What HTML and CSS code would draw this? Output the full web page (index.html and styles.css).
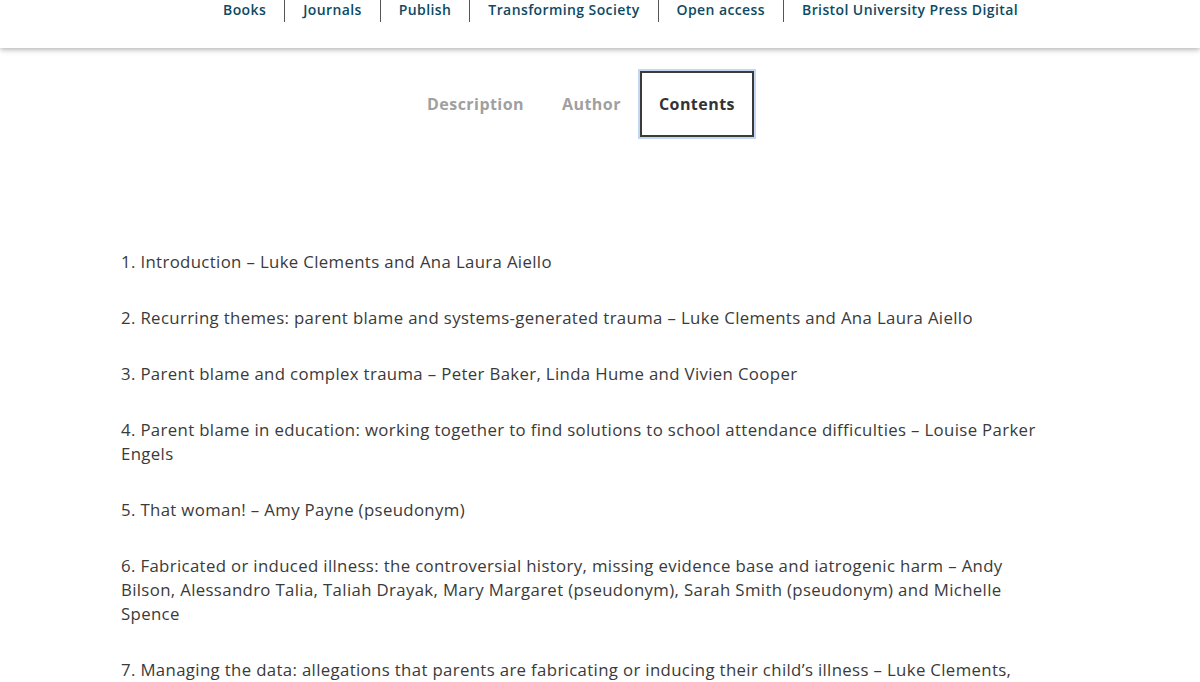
FILE: index.html
```html
<!DOCTYPE html>
<html lang="en">
<head>
    <meta charset="UTF-8">
    <meta name="viewport" content="width=device-width, initial-scale=1.0">
    <title>Contents</title>
    <link rel="stylesheet" href="styles.css">
</head>
<body>
    <header class="site-header">
        <ul class="main-nav">
            <li><a href="#">Books</a></li>
            <li><a href="#">Journals</a></li>
            <li><a href="#">Publish</a></li>
            <li><a href="#">Transforming Society</a></li>
            <li><a href="#">Open access</a></li>
            <li><a href="#">Bristol University Press Digital</a></li>
        </ul>
    </header>

    <div class="tabs">
        <button class="tab">Description</button>
        <button class="tab">Author</button>
        <button class="tab active">Contents</button>
    </div>

    <div class="contents">
        <p>1. Introduction – Luke Clements and Ana Laura Aiello</p>
        <p>2. Recurring themes: parent blame and systems-generated trauma – Luke Clements and Ana Laura Aiello</p>
        <p>3. Parent blame and complex trauma – Peter Baker, Linda Hume and Vivien Cooper</p>
        <p>4. Parent blame in education: working together to find solutions to school attendance difficulties – Louise Parker Engels</p>
        <p>5. That woman! – Amy Payne (pseudonym)</p>
        <p>6. Fabricated or induced illness: the controversial history, missing evidence base and iatrogenic harm – Andy Bilson, Alessandro Talia, Taliah Drayak, Mary Margaret (pseudonym), Sarah Smith (pseudonym) and Michelle Spence</p>
        <p>7. Managing the data: allegations that parents are fabricating or inducing their child’s illness – Luke Clements, Ana Laura Aiello and Sorsha Roberts</p>
    </div>
</body>
</html>
```

FILE: styles.css
```css
body {
    font-family: "Open Sans", "Liberation Sans", sans-serif;
    margin: 0;
    color: #3a3a3a;
    background: #fff;
    overflow: hidden;
}
.site-header {
    height: 48px;
    background: #fff;
    box-shadow: 0 2px 5px rgba(0, 0, 0, 0.28);
    position: relative;
}
.main-nav {
    list-style: none;
    margin: 0;
    padding: 0 0 0 41px;
    display: flex;
    justify-content: center;
}
.main-nav li {
    height: 22px;
    padding: 0 18px;
}
.main-nav li + li {
    border-left: 1px solid #555;
}
.main-nav a {
    display: block;
    font-size: 14px;
    font-weight: 600;
    letter-spacing: 0.4px;
    line-height: 20px;
    color: #0d4a63;
    text-decoration: none;
}
.tabs {
    display: flex;
    justify-content: center;
    padding-right: 38px;
    margin-top: 23px;
}
.tab {
    font-family: inherit;
    font-size: 16px;
    font-weight: 700;
    letter-spacing: 0.45px;
    line-height: 24px;
    color: #a0a0a0;
    background: none;
    border: 2px solid transparent;
    padding: 19px 17px;
    cursor: pointer;
}
.tab.active {
    color: #333;
    border-color: #3a3a3a;
    outline: 2px solid #c3d7f3;
}
.contents {
    width: 918px;
    margin: 0 0 0 121px;
    padding-top: 113px;
}
.contents p {
    font-size: 16.8px;
    letter-spacing: 0.35px;
    line-height: 24px;
    margin: 0 0 32px;
}
```
